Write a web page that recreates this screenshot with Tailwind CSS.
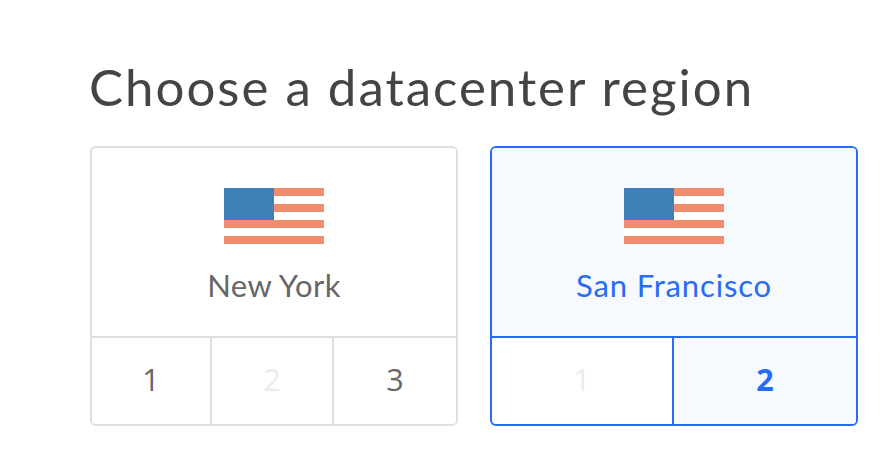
<!DOCTYPE html>
<html lang="en">
<head>
<meta charset="utf-8">
<title>Choose a datacenter region</title>
<script src="https://cdn.jsdelivr.net/npm/@tailwindcss/browser@4"></script>
</head>
<body class="bg-white w-[886px] h-[450px] overflow-hidden pl-[89px] pt-[57px] font-['Lato',sans-serif]">
<h1 class="h-[60px] leading-[60px] text-[51px] tracking-[2px] text-[#444] whitespace-nowrap">Choose a datacenter region</h1>
<main class="flex gap-8 mt-[29px] ml-px">
  <section class="w-[368px] h-[280px] shrink-0 flex flex-col border-2 border-[#dfdfdf] rounded-[6px] overflow-hidden text-[#676767]">
    <div class="h-[188px] shrink-0 flex flex-col items-center pt-10">
      <svg class="block" width="100" height="56" viewBox="0 0 100 56" shape-rendering="crispEdges"><path fill="#fff" d="M0 0h100v56H0z"/><path fill="#f18c6e" d="M0 0h100v8H0zM0 16h100v8H0zM0 32h100v8H0zM0 48h100v8H0z"/><path fill="#3f80b8" d="M0 0h50v32H0z"/></svg>
      <div class="mt-[21px] h-10 leading-10 text-[31px] tracking-[0.4px] whitespace-nowrap"><span>New York</span></div>
    </div>
    <div class="h-[88px] shrink-0 flex border-t-2 border-[#dfdfdf] text-[30.5px] leading-[83px] text-center font-['Open_Sans',sans-serif]">
      <div class="w-[118px]"><span>1</span></div>
      <div class="w-[122px] border-l-2 border-[#dfdfdf] text-[#ececec]"><span>2</span></div>
      <div class="w-[124px] border-l-2 border-[#dfdfdf]"><span>3</span></div>
    </div>
  </section>
  <section class="w-[368px] h-[280px] shrink-0 flex flex-col border-2 border-[#276bf6] rounded-[6px] overflow-hidden text-[#276bf6]">
    <div class="h-[188px] shrink-0 flex flex-col items-center pt-10 bg-[#f6f9fe]">
      <svg class="block" width="100" height="56" viewBox="0 0 100 56" shape-rendering="crispEdges"><path fill="#fff" d="M0 0h100v56H0z"/><path fill="#f18c6e" d="M0 0h100v8H0zM0 16h100v8H0zM0 32h100v8H0zM0 48h100v8H0z"/><path fill="#3f80b8" d="M0 0h50v32H0z"/></svg>
      <div class="mt-[21px] h-10 leading-10 text-[31px] tracking-[0.85px] whitespace-nowrap"><span>San Francisco</span></div>
    </div>
    <div class="h-[88px] shrink-0 flex border-t-2 border-[#276bf6] text-[30.5px] leading-[83px] text-center font-['Open_Sans',sans-serif]">
      <div class="w-[180px] text-[#ececec]"><span>1</span></div>
      <div class="w-[184px] border-l-2 border-[#276bf6] bg-[#f6f9fe] font-bold"><span>2</span></div>
    </div>
  </section>
</main>
</body>
</html>
